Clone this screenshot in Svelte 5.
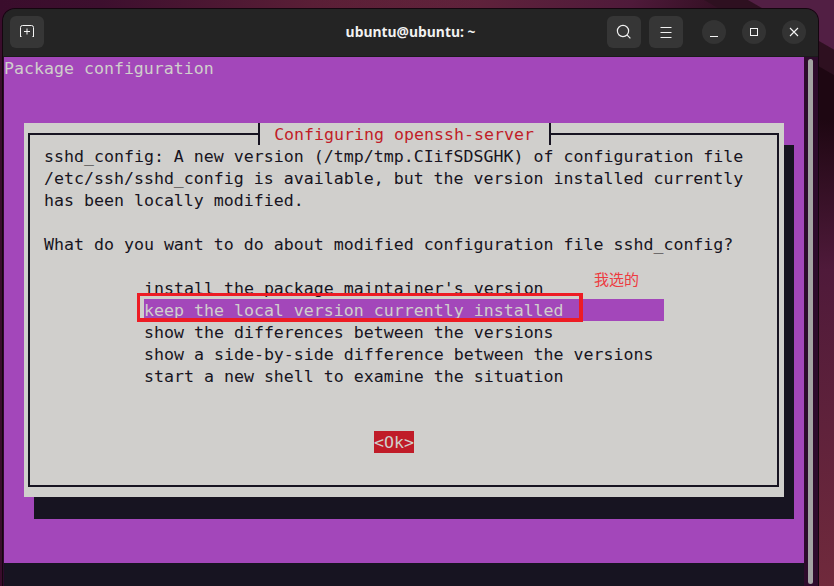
<script>
  const intro = [
    'sshd_config: A new version (/tmp/tmp.CIifSDSGHK) of configuration file',
    '/etc/ssh/sshd_config is available, but the version installed currently',
    'has been locally modified.',
    ' ',
    'What do you want to do about modified configuration file sshd_config?',
    ' '
  ];
  const options = [
    "install the package maintainer's version",
    'keep the local version currently installed',
    'show the differences between the versions',
    'show a side-by-side difference between the versions',
    'start a new shell to examine the situation'
  ];
</script>

<div class="desktop">
  <div class="window">
    <header class="titlebar">
      <button class="tool" aria-label="New tab">
        <svg width="16" height="16" viewBox="0 0 16 16" fill="none" stroke="#f4f4f4" stroke-width="1">
          <path d="M1 12.5h1.5M1.5 12.5V3.5a2 2 0 0 1 2-2h9a2 2 0 0 1 2 2v9M13.5 12.5h1.5M8 4.5v6M5 7.5h6" />
        </svg>
      </button>
      <div class="title">ubuntu@ubuntu: ~</div>
      <button class="tool" aria-label="Search">
        <svg width="16" height="16" viewBox="0 0 16 16" fill="none" stroke="#f0f0f0" stroke-width="1.2">
          <circle cx="7" cy="7" r="5.6" /><path d="M11.2 11.2l3.2 3.2" />
        </svg>
      </button>
      <button class="tool menu" aria-label="Menu">
        <svg width="16" height="16" viewBox="0 0 16 16" fill="none" stroke="#f0f0f0" stroke-width="1">
          <path d="M2.5 3.5h11M2.5 8.5h11M2.5 13.5h11" />
        </svg>
      </button>
      <button class="win first" aria-label="Minimize">
        <svg width="12" height="12" viewBox="0 0 12 12" fill="none" stroke="#f4f4f4" stroke-width="1"><path d="M2 10.5h8" /></svg>
      </button>
      <button class="win" aria-label="Maximize">
        <svg width="12" height="12" viewBox="0 0 12 12" fill="none" stroke="#f4f4f4" stroke-width="1"><rect x="2.5" y="2.5" width="7" height="7" /></svg>
      </button>
      <button class="win" aria-label="Close">
        <svg width="12" height="12" viewBox="0 0 12 12" fill="none" stroke="#f4f4f4" stroke-width="1.1"><path d="M2 2l8 8M10 2l-8 8" /></svg>
      </button>
    </header>
    <div class="body">
      <main class="term">
        <div class="screen">
          <div class="row backtitle">Package configuration</div>
          <section class="dialog">
            <div class="frame">
              <div class="dtitle">Configuring openssh-server</div>
              {#each intro as line}
                <div class="row">{line}</div>
              {/each}
              <div class="list">
                {#each options as opt, i}
                  <div class="row opt" class:sel={i === 1}>{opt}</div>
                {/each}
              </div>
              <div class="actions"><span class="ok">&lt;Ok&gt;</span></div>
              <div class="mark"></div>
              <div class="note">我选的</div>
            </div>
          </section>
        </div>
        <div class="statusline"></div>
      </main>
      <aside class="scroll"><div class="thumb"></div></aside>
    </div>
  </div>
</div>

<style>
  :global(body) {
    margin: 0;
    overflow: hidden;
  }
  .desktop {
    width: 834px;
    height: 586px;
    overflow: hidden;
    box-sizing: border-box;
    padding: 9px 0 0 3px;
    background:
      linear-gradient(30deg, transparent 881px, #521f44 882px),
      linear-gradient(30deg, transparent 859px, #2e1020 860px),
      linear-gradient(90deg, #3a0d2c 0, #3d0f2e 100px, rgba(61, 15, 46, 0) 480px),
      radial-gradient(circle at 834px 60px, #1e0712 0, #1e0712 60px, #4f1a3a 210px, #702a3c 526px);
  }
  .window {
    width: 815px;
    height: 577px;
    background: #2e0b2c;
    border-radius: 12px 12px 0 0;
    overflow: hidden;
    box-shadow: 0 0 0 1px #14060f;
    display: flex;
    flex-direction: column;
  }
  .titlebar {
    height: 48px;
    flex: none;
    box-sizing: border-box;
    padding: 7px 12px 0 7px;
    background: #242424;
    border-bottom: 1px solid #1b1b1b;
    display: flex;
    align-items: flex-start;
  }
  .tool {
    width: 34px;
    height: 32px;
    padding: 0;
    border: 0;
    border-radius: 6px;
    background: #363636;
    display: flex;
    align-items: center;
    justify-content: center;
  }
  .menu {
    margin-left: 8px;
  }
  .win {
    width: 24px;
    height: 24px;
    margin: 4px 0 0 16px;
    padding: 0;
    border: 0;
    border-radius: 50%;
    background: #333333;
    display: flex;
    align-items: center;
    justify-content: center;
  }
  .win.first {
    margin-left: 19px;
  }
  .title {
    flex: 1;
    text-align: center;
    color: #f2f2f2;
    font: 700 13.8px/32px "Open Sans", sans-serif;
    padding-left: 170px;
  }
  .body {
    flex: 1;
    display: flex;
    min-height: 0;
  }
  .term {
    width: 800px;
    margin-left: 1px;
    flex: none;
    display: flex;
    flex-direction: column;
    background: #a347ba;
    font-family: "DejaVu Sans Mono", monospace;
    font-size: 16.6px;
    line-height: 24px;
    color: #171421;
  }
  .screen {
    height: 506px;
  }
  .row {
    height: 22px;
    white-space: pre;
  }
  .backtitle {
    color: #d0cfcc;
  }
  .dialog {
    width: 760px;
    height: 374px;
    margin: 44px 0 0 20px;
    box-sizing: border-box;
    padding: 10px 5px 10px 4px;
    background: #d0cfcc;
    box-shadow: 10px 22px 0 #171421;
  }
  .frame {
    position: relative;
    height: 100%;
    box-sizing: border-box;
    padding: 10px 14px 0;
    border: 2px solid #171421;
  }
  .dtitle {
    position: absolute;
    left: 228px;
    top: -12px;
    width: 289px;
    height: 22px;
    border: solid #171421;
    border-width: 0 2px;
    background: #d0cfcc;
    color: #c01c28;
    text-align: center;
    text-indent: -1px;
    white-space: pre;
  }
  .list {
    margin-left: 100px;
    width: 520px;
  }
  .sel {
    background: #a347ba;
    color: #d0cfcc;
  }
  .actions {
    margin: 44px 0 0 330px;
    height: 22px;
  }
  .ok {
    display: block;
    width: 40px;
    height: 22px;
    background: #c01c28;
    color: #d0cfcc;
    white-space: pre;
  }
  .mark {
    position: absolute;
    left: 107px;
    top: 158px;
    width: 446px;
    height: 29px;
    box-sizing: border-box;
    border: solid #ed1c24;
    border-width: 3px 4px 4px 3px;
  }
  .note {
    position: absolute;
    left: 564px;
    top: 134px;
    color: #ed3a3f;
    font: 15px/20px "Noto Sans CJK SC", sans-serif;
  }
  .statusline {
    flex: 1;
    background: #171421;
  }
  .scroll {
    flex: 1;
    position: relative;
  }
  .thumb {
    position: absolute;
    left: 4px;
    top: 2px;
    bottom: 2px;
    width: 5px;
    border-radius: 3px;
    background: #a3a3a3;
  }
</style>
